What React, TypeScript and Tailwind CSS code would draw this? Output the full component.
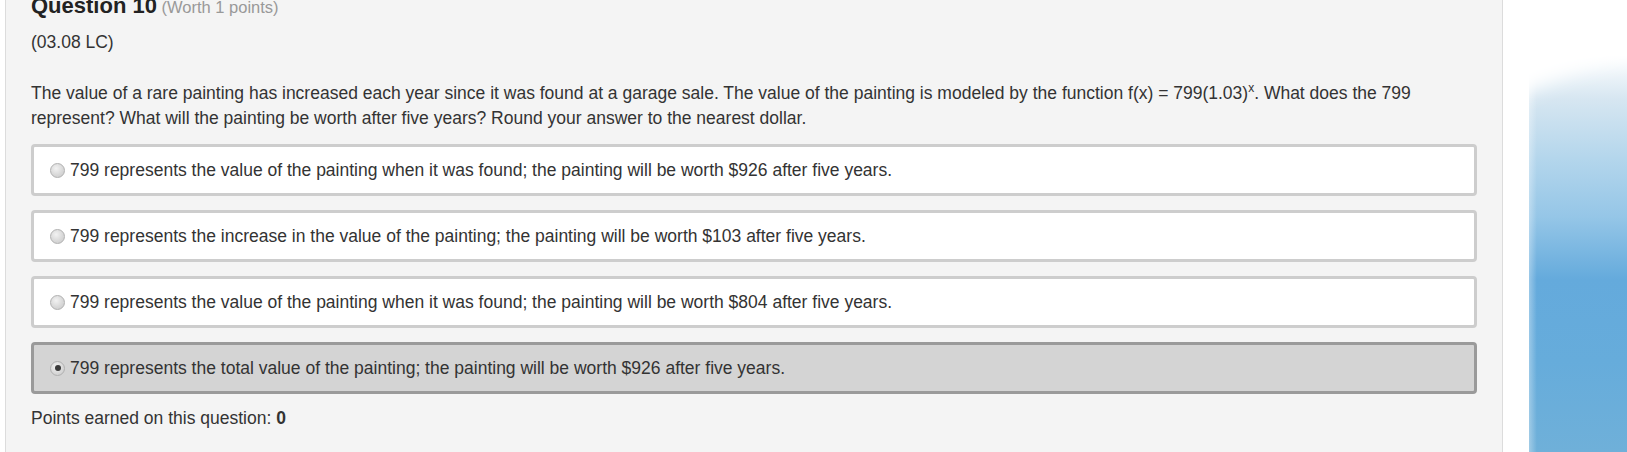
import React from "react";

const options = [
  { text: "799 represents the value of the painting when it was found; the painting will be worth $926 after five years.", selected: false },
  { text: "799 represents the increase in the value of the painting; the painting will be worth $103 after five years.", selected: false },
  { text: "799 represents the value of the painting when it was found; the painting will be worth $804 after five years.", selected: false },
  { text: "799 represents the total value of the painting; the painting will be worth $926 after five years.", selected: true },
];

function Radio({ checked }: { checked: boolean }) {
  return (
    <span className="relative inline-block w-[15px] h-[15px] shrink-0 rounded-full border border-[#b0b0b0] bg-[radial-gradient(circle_at_40%_35%,#f2f2f2_0%,#d9d9d9_55%,#c8c8c8_100%)]">
      {checked && (
        <span className="absolute left-[3.5px] top-[3.5px] w-[6px] h-[6px] rounded-full bg-[#3a3a3a]" />
      )}
    </span>
  );
}

function Decoration() {
  return (
    <svg width="98" height="452" viewBox="0 0 98 452" preserveAspectRatio="none" className="block">
      <defs>
        <linearGradient id="g" x1="0" y1="0" x2="0" y2="1">
          <stop offset="0" stopColor="#ffffff" />
          <stop offset="0.12" stopColor="#ffffff" />
          <stop offset="0.22" stopColor="#d6e6f1" />
          <stop offset="0.35" stopColor="#b4d6ec" />
          <stop offset="0.48" stopColor="#95c6e7" />
          <stop offset="0.62" stopColor="#64aadc" />
          <stop offset="0.8" stopColor="#66acdb" />
          <stop offset="1" stopColor="#6fb0d9" />
        </linearGradient>
        <linearGradient id="h" x1="0" y1="0" x2="1" y2="0">
          <stop offset="0" stopColor="#ffffff" stopOpacity="0.35" />
          <stop offset="0.08" stopColor="#ffffff" stopOpacity="0" />
          <stop offset="1" stopColor="#ffffff" stopOpacity="0" />
        </linearGradient>
        <filter id="b" x="-50%" y="-50%" width="200%" height="200%">
          <feGaussianBlur stdDeviation="9" />
        </filter>
      </defs>
      <rect width="98" height="452" fill="url(#g)" />
      <rect width="98" height="452" fill="url(#h)" />
      <path d="M-20 -20 L120 -20 L120 55 Q60 60 -20 100 Z" fill="#ffffff" filter="url(#b)" />
    </svg>
  );
}

export default function App() {
  return (
    <div className="w-[1627px] h-[452px] overflow-hidden bg-white flex font-['Liberation_Sans',Arial,sans-serif] text-[#333]">
      <div className="w-[5px] shrink-0" />
      <div className="w-[1498px] shrink-0 h-[470px] -mt-[2px] bg-[#f4f4f4] border border-[#dcdcdc] pl-[25px] pr-[25px]">
        <div className="mt-[-5px] leading-[24px] whitespace-nowrap">
          <span className="text-[22px] font-bold text-[#222]">Question 10</span>
          <span className="text-[16.5px] text-[#999]"> (Worth 1 points)</span>
        </div>
        <div className="mt-[10px] text-[17.5px] leading-[24px]">(03.08 LC)</div>
        <p className="mt-[27px] text-[17.5px] leading-[25px]">
          The value of a rare painting has increased each year since it was found at a garage sale. The value of the painting is modeled by the function f(x) = 799(1.03)<span className="text-[12px] align-[7px] leading-none">x</span>. What does the 799 represent? What will the painting be worth after five years? Round your answer to the nearest dollar.
        </p>
        <div className="mt-[13px] flex flex-col gap-[14px]">
          {options.map((o, i) => (
            <div
              key={i}
              className={
                o.selected
                  ? "h-[52px] rounded-[4px] border-[3px] border-[#9a9a9a] bg-[#d4d4d4] flex items-center pl-[16px] gap-[5px]"
                  : "h-[52px] rounded-[4px] border-[3px] border-[#cdcdcd] bg-white flex items-center pl-[16px] gap-[5px]"
              }
            >
              <Radio checked={o.selected} />
              <span className="text-[17.5px] leading-[24px] whitespace-nowrap">{o.text}</span>
            </div>
          ))}
        </div>
        <div className="mt-[12px] text-[17.5px] leading-[24px]">
          Points earned on this question: <span className="font-bold">0</span>
        </div>
      </div>
      <div className="w-[26px] shrink-0" />
      <Decoration />
    </div>
  );
}
